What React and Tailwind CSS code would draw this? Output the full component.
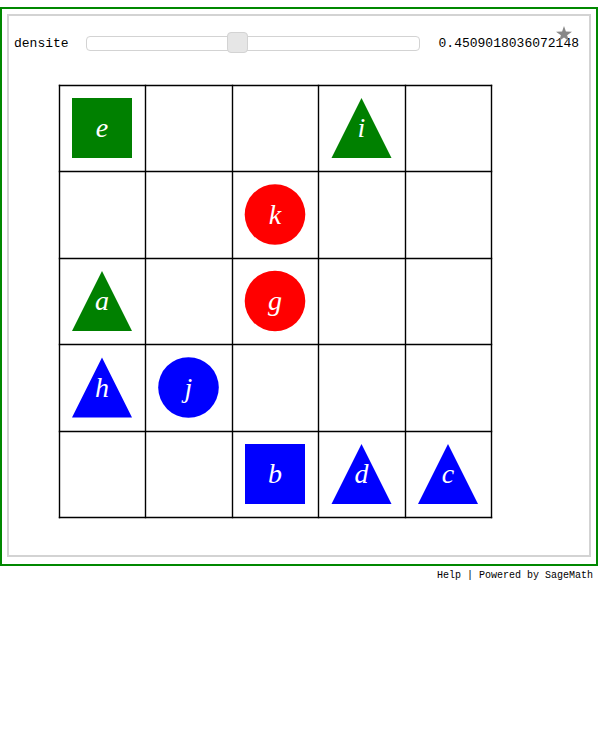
import { useState } from "react";

const COLS = [50.5, 136.5, 223.5, 309.5, 396.5, 482.5];
const ROWS = [25.5, 111.5, 198.5, 284.5, 371.5, 457.5];
const HALF = 30;

const PIECES = [
  { name: "e", shape: "square", color: "#008000", col: 0, row: 0 },
  { name: "i", shape: "triangle", color: "#008000", col: 3, row: 0 },
  { name: "k", shape: "circle", color: "#ff0000", col: 2, row: 1 },
  { name: "a", shape: "triangle", color: "#008000", col: 0, row: 2 },
  { name: "g", shape: "circle", color: "#ff0000", col: 2, row: 2 },
  { name: "h", shape: "triangle", color: "#0000ff", col: 0, row: 3 },
  { name: "j", shape: "circle", color: "#0000ff", col: 1, row: 3 },
  { name: "b", shape: "square", color: "#0000ff", col: 2, row: 4 },
  { name: "d", shape: "triangle", color: "#0000ff", col: 3, row: 4 },
  { name: "c", shape: "triangle", color: "#0000ff", col: 4, row: 4 },
];

function Piece({ name, shape, color, col, row }) {
  const x = 93 + col * 86.5;
  const y = 68 + row * 86.5;
  return (
    <g>
      {shape === "square" && (
        <rect x={x - HALF} y={y - HALF} width={HALF * 2} height={HALF * 2} fill={color} />
      )}
      {shape === "circle" && <circle cx={x} cy={y} r={HALF + 0.3} fill={color} />}
      {shape === "triangle" && (
        <polygon
          points={`${x},${y - HALF} ${x - HALF},${y + HALF} ${x + HALF},${y + HALF}`}
          fill={color}
        />
      )}
      <text
        x={x}
        y={y + 9}
        textAnchor="middle"
        fill="#fff"
        className="font-['Liberation_Serif',serif] text-[28px] italic"
      >
        {name}
      </text>
    </g>
  );
}

function World() {
  return (
    <svg viewBox="0 0 580 495" className="block w-full" role="img" aria-label="World">
      <g stroke="#000" strokeWidth="1.4" strokeLinecap="square">
        {COLS.map((x) => (
          <line key={x} x1={x} x2={x} y1={ROWS[0]} y2={ROWS[5]} />
        ))}
        {ROWS.map((y) => (
          <line key={y} x1={COLS[0]} x2={COLS[5]} y1={y} y2={y} />
        ))}
      </g>
      {PIECES.map((p) => (
        <Piece key={p.name} {...p} />
      ))}
    </svg>
  );
}

export default function App() {
  const [density, setDensity] = useState(0.4509018036072148);
  return (
    <main className="bg-white pt-[7px] pr-0.5 font-['Liberation_Mono',monospace] text-black">
      <section className="relative border-2 border-[#008800] px-[5px] pt-[5px] pb-[7px]">
        <div className="border-2 border-[#d3d3d3]">
          <div className="flex items-center pt-4 pr-[10px] pb-[5px] pl-[5px] text-[13px] leading-[23px]">
            <label htmlFor="densite" className="mr-[17px]">
              densite
            </label>
            <input
              id="densite"
              type="range"
              min="0"
              max="1"
              step="any"
              value={density}
              onChange={(e) => setDensity(Number(e.target.value))}
              className="h-[21px] min-w-0 flex-1 cursor-pointer appearance-none bg-transparent [&::-webkit-slider-runnable-track]:h-[15px] [&::-webkit-slider-runnable-track]:rounded [&::-webkit-slider-runnable-track]:border [&::-webkit-slider-runnable-track]:border-[#d3d3d3] [&::-webkit-slider-runnable-track]:bg-white [&::-webkit-slider-thumb]:-mt-[5px] [&::-webkit-slider-thumb]:size-[21px] [&::-webkit-slider-thumb]:appearance-none [&::-webkit-slider-thumb]:rounded [&::-webkit-slider-thumb]:border [&::-webkit-slider-thumb]:border-solid [&::-webkit-slider-thumb]:border-[#d3d3d3] [&::-webkit-slider-thumb]:bg-[#e6e6e6]"
            />
            <output htmlFor="densite" className="ml-[19px]">
              {density}
            </output>
          </div>
          <World />
        </div>
        <button type="button" aria-label="Permalink" className="absolute top-[17px] right-6">
          <svg viewBox="0 0 16 15" className="h-[15px] w-4" fill="#888">
            <polygon points="8,0 9.9,5.6 16,5.7 11.1,9.2 12.9,15 8,11.5 3.1,15 4.9,9.2 0,5.7 6.1,5.6" />
          </svg>
        </button>
      </section>
      <footer className="pt-1 pr-[5px] text-right text-[10px] leading-3">
        <a href="#help">Help</a> | <a href="#sagemath">Powered by SageMath</a>
      </footer>
    </main>
  );
}
